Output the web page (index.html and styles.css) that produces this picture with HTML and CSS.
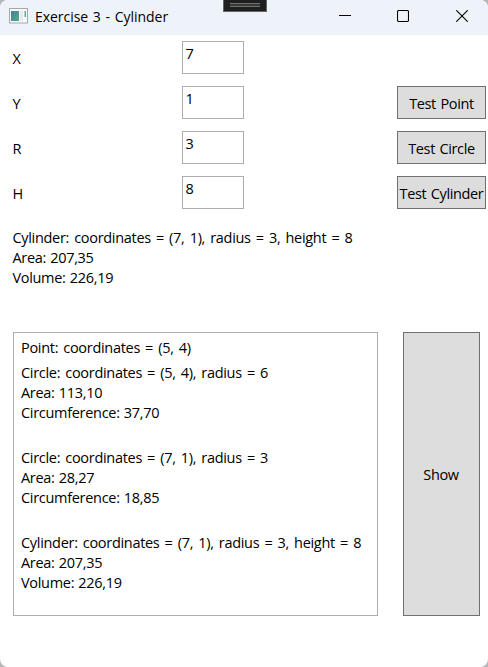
FILE: index.html
```html
<!DOCTYPE html>
<html lang="en">
<head>
<meta charset="utf-8">
<title>Exercise 3 - Cylinder</title>
<link rel="stylesheet" href="styles.css">
</head>
<body>
<div class="window">
  <header class="titlebar">
    <svg class="app-icon" width="19" height="16" viewBox="0 0 19 16">
      <defs><linearGradient id="pane" x1="0" y1="0" x2="1" y2="1"><stop offset="0" stop-color="#457fa0"/><stop offset="1" stop-color="#4fae83"/></linearGradient></defs>
      <rect x=".5" y=".5" width="18" height="14.5" fill="#f7f9fa" stroke="#a4a8ab"/>
      <rect x="2" y="3" width="8" height="10" fill="url(#pane)"/>
      <rect x="11" y="3" width="3" height="10" fill="#e6eaec"/>
      <rect x="15.5" y="3" width="1.5" height="6" fill="#69aa94"/>
    </svg>
    <h1 class="title">Exercise 3 - Cylinder</h1>
    <nav class="controls">
      <svg width="12" height="12" viewBox="0 0 12 12"><path d="M0 5.5h12" stroke="#000"/></svg>
      <svg class="maximize" width="12" height="12" viewBox="0 0 12 12"><rect x=".5" y=".5" width="11" height="11" rx="1.3" fill="none" stroke="#000" stroke-width="1.1"/></svg>
      <svg width="12" height="12" viewBox="0 0 12 12"><path d="M.3.3l11.4 11.4M11.7.3L.3 11.7" stroke="#000" stroke-width="1.1"/></svg>
    </nav>
    <div class="debug-tab"><span></span></div>
  </header>
  <main>
    <form class="fields">
      <div class="row"><label>X</label><div class="input">7</div></div>
      <div class="row"><label>Y</label><div class="input">1</div><button type="button">Test Point</button></div>
      <div class="row"><label>R</label><div class="input">3</div><button type="button">Test Circle</button></div>
      <div class="row"><label>H</label><div class="input">8</div><button type="button">Test Cylinder</button></div>
    </form>
    <section class="result">
      <p class="shape">Cylinder: coordinates = (7, 1), radius = 3, height = 8</p>
      <p>Area: 207,35</p>
      <p>Volume: 226,19</p>
    </section>
    <section class="history">
      <div class="list">
        <div class="item">
          <p class="shape">Point: coordinates = (5, 4)</p>
        </div>
        <div class="item">
          <p class="shape">Circle: coordinates = (5, 4), radius = 6</p>
          <p>Area: 113,10</p>
          <p>Circumference: 37,70</p>
        </div>
        <div class="item gap">
          <p class="shape">Circle: coordinates = (7, 1), radius = 3</p>
          <p>Area: 28,27</p>
          <p>Circumference: 18,85</p>
        </div>
        <div class="item gap">
          <p class="shape">Cylinder: coordinates = (7, 1), radius = 3, height = 8</p>
          <p>Area: 207,35</p>
          <p>Volume: 226,19</p>
        </div>
      </div>
      <button type="button" class="show">Show</button>
    </section>
  </main>
</div>
</body>
</html>
```
FILE: styles.css
```css
* { box-sizing: border-box; }
body {
  margin: 0;
  background: #b4b6b8;
  font: 14.5px/20px "Open Sans", "Noto Sans", sans-serif;
  letter-spacing: -0.3px;
  word-spacing: 0.7px;
  color: #000;
}
p {
  margin: 0;
  white-space: nowrap;
}
.shape { word-spacing: 1.65px; }
.window {
  height: 667px;
  background: #fff;
  border-radius: 8px;
  overflow: hidden;
}
.titlebar {
  position: relative;
  display: flex;
  align-items: center;
  height: 35px;
  padding: 0 20px 3px 9px;
  background: #eef3fa;
}
.title {
  margin: 1px 0 0 7px;
  font-size: 14px;
  font-weight: 400;
  letter-spacing: -0.05px;
  word-spacing: 1.2px;
}
.controls {
  display: flex;
  gap: 46px;
  margin-left: auto;
}
.maximize { margin-right: 1px; }
.debug-tab {
  position: absolute;
  left: 223px;
  top: 0;
  width: 44px;
  height: 12px;
  padding: 3px 6px;
  border: 1px solid #666;
  border-top: 0;
  background: #1f1f1f;
}
.debug-tab span {
  display: block;
  height: 4px;
  border: solid #707070;
  border-width: 1px 0;
  background: #383838;
}
main { padding: 6px 2px 0 12.4px; }
.fields { display: grid; gap: 12px; }
.row {
  display: grid;
  grid-template-columns: 169.6px 62px 89px;
  height: 33px;
}
.row label { padding-top: 8px; }
.input {
  padding: 2px 2.5px;
  border: 1px solid #abadb3;
}
.row button { margin-left: 153px; width: 89px; }
button {
  padding: 3px 0 0;
  border: 1px solid #707070;
  border-radius: 0;
  background: #ddd;
  color: #000;
  font: inherit;
  letter-spacing: -0.38px;
  word-spacing: 1.2px;
  white-space: nowrap;
}
.result { height: 104px; margin-top: 19px; }
.history {
  display: flex;
  gap: 25px;
  height: 284px;
  padding-left: 0.6px;
}
.list {
  width: 365px;
  padding: 5px 7px;
  border: 1px solid #abadb3;
}
.item { margin-bottom: 5px; }
.gap { margin-top: 25px; }
.show { width: 77px; padding: 1px 1px 0 0; }
```
